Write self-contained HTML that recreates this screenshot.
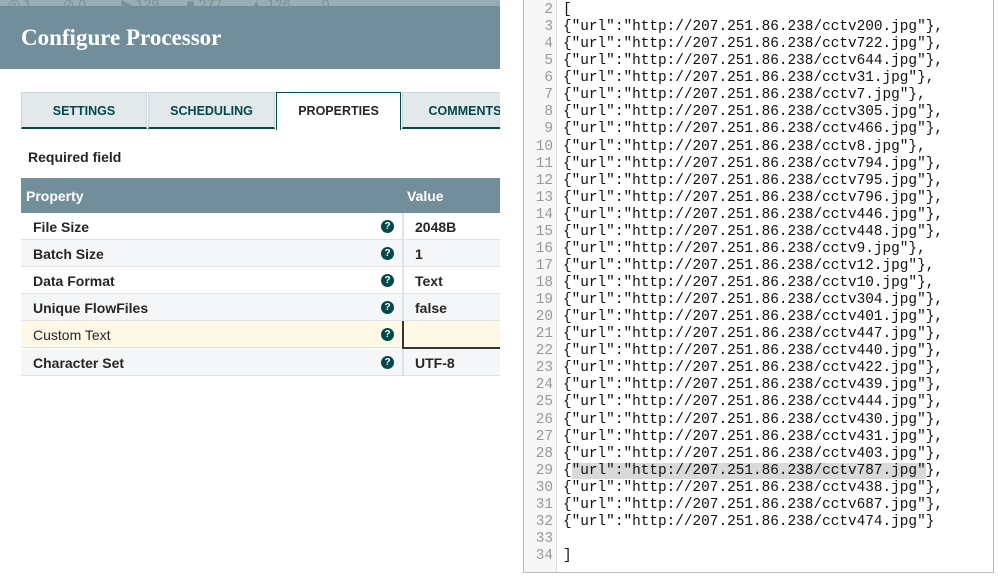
<!DOCTYPE html>
<html><head><style>
*{box-sizing:border-box;margin:0;padding:0}
body{width:998px;height:576px;overflow:hidden;background:#fff;font-family:"Liberation Sans",sans-serif;position:relative}
.left{position:absolute;left:0;top:0;width:500px;height:576px;overflow:hidden}
.strip{position:absolute;left:0;top:0;width:500px;height:6px;background:#9aacb5;overflow:hidden;color:#7d8f98;font-size:14px;line-height:8px}
.hdr{position:absolute;left:0;top:6px;width:500px;height:63px;background:#728e9b}
.hdr h1{position:absolute;left:21px;top:19px;font-family:"Liberation Serif",serif;font-weight:bold;font-size:23px;color:#fff}
.tab{position:absolute;top:92px;height:37px;background:#e3e8eb;border:1px solid #cdd6da;border-bottom:2px solid #004849;color:#004849;font-weight:bold;font-size:12.5px;text-align:center;line-height:36px}
.tab.act{background:#fff;border:1px solid #004849;border-bottom:none;color:#262626;top:92px;height:38px}
.req{position:absolute;left:28px;top:149px;font-size:14px;font-weight:bold;color:#262626}
.th{position:absolute;left:21px;top:178px;width:479px;height:35px;background:#728e9b;color:#fff;font-weight:bold;font-size:14px}
.th span{position:absolute;top:10px}
.row{position:absolute;left:21px;width:479px;height:27px;border-bottom:1px solid #dde3e6;font-size:14px;color:#262626}
.row .n{position:absolute;left:12px;top:6px;font-weight:bold}
.row .v{position:absolute;left:394px;top:6px;font-weight:bold}
.row .q{position:absolute;left:360px;top:7px;width:13px;height:13px;border-radius:50%;background:#004849;color:#fff;font-size:10px;font-weight:bold;text-align:center;line-height:13px}
.row .sep{position:absolute;left:381px;top:0;width:2px;height:27px;background:#dde3e6}
.ed{position:absolute;left:523px;top:-2px;width:471px;height:575px;border:1px solid #bbb;background:#fff}
.gut{position:absolute;left:0;top:0;width:33px;height:100%;background:#f7f7f7;border-right:1px solid #ddd}
.code{position:absolute;left:0;top:0;font-family:"Liberation Mono",monospace;font-size:14.4px;line-height:17.07px;color:#111;white-space:pre}
.ln{display:inline-block;width:29px;text-align:right;color:#999;margin-right:10px}
.hl{background:#d9d9d9}
</style></head><body>
<div class="left">
<div class="strip">&nbsp;&nbsp;◎ 1 &nbsp;&nbsp;&nbsp;&nbsp;&nbsp;&nbsp; ⊘ 0 &nbsp;&nbsp;&nbsp;&nbsp;&nbsp;&nbsp;&nbsp; ▶ 129 &nbsp;&nbsp;&nbsp;&nbsp;&nbsp; ■ 277 &nbsp;&nbsp;&nbsp;&nbsp;&nbsp; ▲ 126 &nbsp;&nbsp;&nbsp;&nbsp;&nbsp;&nbsp; 0</div>
<div class="hdr"><h1>Configure Processor</h1></div>
<div class="tab" style="left:21px;width:126px">SETTINGS</div>
<div class="tab" style="left:148px;width:127px">SCHEDULING</div>
<div class="tab act" style="left:276px;width:125px">PROPERTIES</div>
<div class="tab" style="left:402px;width:126px">COMMENTS</div>
<div class="req">Required field</div>
<div class="th"><span style="left:5px">Property</span><span style="left:386px">Value</span></div>
<div class="row" style="top:213px;background:#fff"><span class="n">File Size</span><span class="q">?</span><span class="sep"></span><span class="v">2048B</span></div>
<div class="row" style="top:240px;background:#f4f6f7"><span class="n">Batch Size</span><span class="q">?</span><span class="sep"></span><span class="v">1</span></div>
<div class="row" style="top:267px;background:#fff"><span class="n">Data Format</span><span class="q">?</span><span class="sep"></span><span class="v">Text</span></div>
<div class="row" style="top:294px;background:#f4f6f7"><span class="n">Unique FlowFiles</span><span class="q">?</span><span class="sep"></span><span class="v">false</span></div>
<div class="row" style="top:321px;background:#fdf9e6"><span class="n" style="font-weight:normal">Custom Text</span><span class="q">?</span><span style="position:absolute;left:381px;top:0;width:98px;height:28px;border-left:2px solid #333;border-bottom:2px solid #333"></span></div>
<div class="row" style="top:349px;background:#f4f6f7"><span class="n">Character Set</span><span class="q">?</span><span class="sep"></span><span class="v">UTF-8</span></div>
</div>
<div class="ed"><div class="gut"></div>
<div class="code" style="top:3px"><span class="ln">2</span>[
<span class="ln">3</span>{"url":"http://207.251.86.238/cctv200.jpg"},
<span class="ln">4</span>{"url":"http://207.251.86.238/cctv722.jpg"},
<span class="ln">5</span>{"url":"http://207.251.86.238/cctv644.jpg"},
<span class="ln">6</span>{"url":"http://207.251.86.238/cctv31.jpg"},
<span class="ln">7</span>{"url":"http://207.251.86.238/cctv7.jpg"},
<span class="ln">8</span>{"url":"http://207.251.86.238/cctv305.jpg"},
<span class="ln">9</span>{"url":"http://207.251.86.238/cctv466.jpg"},
<span class="ln">10</span>{"url":"http://207.251.86.238/cctv8.jpg"},
<span class="ln">11</span>{"url":"http://207.251.86.238/cctv794.jpg"},
<span class="ln">12</span>{"url":"http://207.251.86.238/cctv795.jpg"},
<span class="ln">13</span>{"url":"http://207.251.86.238/cctv796.jpg"},
<span class="ln">14</span>{"url":"http://207.251.86.238/cctv446.jpg"},
<span class="ln">15</span>{"url":"http://207.251.86.238/cctv448.jpg"},
<span class="ln">16</span>{"url":"http://207.251.86.238/cctv9.jpg"},
<span class="ln">17</span>{"url":"http://207.251.86.238/cctv12.jpg"},
<span class="ln">18</span>{"url":"http://207.251.86.238/cctv10.jpg"},
<span class="ln">19</span>{"url":"http://207.251.86.238/cctv304.jpg"},
<span class="ln">20</span>{"url":"http://207.251.86.238/cctv401.jpg"},
<span class="ln">21</span>{"url":"http://207.251.86.238/cctv447.jpg"},
<span class="ln">22</span>{"url":"http://207.251.86.238/cctv440.jpg"},
<span class="ln">23</span>{"url":"http://207.251.86.238/cctv422.jpg"},
<span class="ln">24</span>{"url":"http://207.251.86.238/cctv439.jpg"},
<span class="ln">25</span>{"url":"http://207.251.86.238/cctv444.jpg"},
<span class="ln">26</span>{"url":"http://207.251.86.238/cctv430.jpg"},
<span class="ln">27</span>{"url":"http://207.251.86.238/cctv431.jpg"},
<span class="ln">28</span>{"url":"http://207.251.86.238/cctv403.jpg"},
<span class="ln">29</span>{<span class="hl">"url":"http://207.251.86.238/cctv787.jpg"</span>},
<span class="ln">30</span>{"url":"http://207.251.86.238/cctv438.jpg"},
<span class="ln">31</span>{"url":"http://207.251.86.238/cctv687.jpg"},
<span class="ln">32</span>{"url":"http://207.251.86.238/cctv474.jpg"}
<span class="ln">33</span>
<span class="ln">34</span>]</div></div>
</body></html>
